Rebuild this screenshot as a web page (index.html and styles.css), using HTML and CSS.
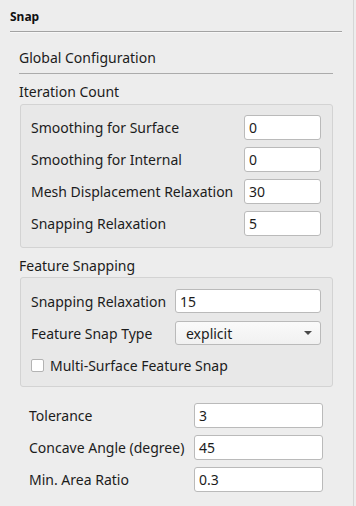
FILE: index.html
```html
<!DOCTYPE html>
<html lang="en">
<head>
  <meta charset="UTF-8">
  <meta name="viewport" content="width=device-width, initial-scale=1.0">
  <link rel="stylesheet" href="styles.css">
</head>
<body>
  <div class="panel">
    <div class="title">Snap</div>
    <div class="sep"></div>

    <div class="section">
      <div class="heading heading-top">Global Configuration</div>
      <div class="line"></div>

      <div class="heading">Iteration Count</div>
      <div class="group group-iter">
        <label>Smoothing for Surface</label>
        <div class="field">0</div>
        <label>Smoothing for Internal</label>
        <div class="field">0</div>
        <label>Mesh Displacement Relaxation</label>
        <div class="field">30</div>
        <label>Snapping Relaxation</label>
        <div class="field">5</div>
      </div>

      <div class="heading">Feature Snapping</div>
      <div class="group group-feat">
        <label>Snapping Relaxation</label>
        <div class="field">15</div>
        <label>Feature Snap Type</label>
        <div class="field combo">
          <span>explicit</span>
          <svg width="8" height="4" viewBox="0 0 8 4"><path d="M0 0h8L4 4z" fill="#4a4a4a"/></svg>
        </div>
        <div class="check-row">
          <span class="box"></span>
          <span>Multi-Surface Feature Snap</span>
        </div>
      </div>

      <div class="form-bottom">
        <label>Tolerance</label>
        <div class="field">3</div>
        <label>Concave Angle (degree)</label>
        <div class="field">45</div>
        <label>Min. Area Ratio</label>
        <div class="field">0.3</div>
      </div>
    </div>
  </div>
</body>
</html>
```

FILE: styles.css
```css
* {
  box-sizing: border-box;
}

body {
  margin: 0;
  padding: 0;
  background-color: #ededed;
  font-family: "Noto Sans", "Open Sans", sans-serif;
  font-size: 14px;
  color: #1c1c1c;
}

.panel {
  width: 354px;
  height: 506px;
  border-right: 1px solid #d6d6d6;
}

.title {
  padding: 9px 0 0 10px;
  height: 31px;
  line-height: 15px;
  font-size: 12px;
  font-weight: 700;
  color: #111;
}

.sep {
  margin-left: 10px;
  width: 332px;
  border-top: 1px solid #a3a3a3;
  border-bottom: 1px solid #f7f7f7;
}

.section {
  margin-left: 19px;
  width: 314px;
}

.heading {
  height: 20px;
  line-height: 20px;
  margin-top: 8px;
}

.heading-top {
  margin-top: 15px;
}

.line {
  margin-top: 5px;
  border-top: 1px solid #ababab;
}

.group {
  margin: 2px 0 0 1px;
  width: 313px;
  background-color: #e8e8e8;
  border: 1px solid #d3d3d3;
  border-radius: 3px;
  display: grid;
  row-gap: 7px;
  align-items: center;
  padding: 10px 11px 11px 10px;
  white-space: nowrap;
}

.group-iter {
  height: 144px;
  grid-template-columns: 213px 77px;
  grid-auto-rows: 25px;
}

.group-feat {
  margin-top: 1px;
  height: 110px;
  padding-top: 11px;
  grid-template-columns: 144px 146px;
  grid-template-rows: 24px 24px 20px;
  row-gap: 8px;
}

.field {
  height: 100%;
  background: #fff;
  border: 1px solid #bababa;
  border-radius: 3px;
  padding-left: 4px;
  display: flex;
  align-items: center;
}

.combo {
  background: linear-gradient(#fafafa, #f1f1f1);
  padding: 0 8px 0 10px;
  justify-content: space-between;
}

.check-row {
  grid-column: 1 / 3;
  display: flex;
  align-items: center;
  gap: 6px;
  margin-top: 4px;
}

.box {
  width: 13px;
  height: 13px;
  background: #fff;
  border: 1px solid #b3b3b3;
  border-radius: 2px;
}

.form-bottom {
  margin-top: 16px;
  padding-left: 10px;
  display: grid;
  grid-template-columns: 165px 129px;
  grid-auto-rows: 25px;
  row-gap: 7px;
  align-items: center;
  white-space: nowrap;
}
```
